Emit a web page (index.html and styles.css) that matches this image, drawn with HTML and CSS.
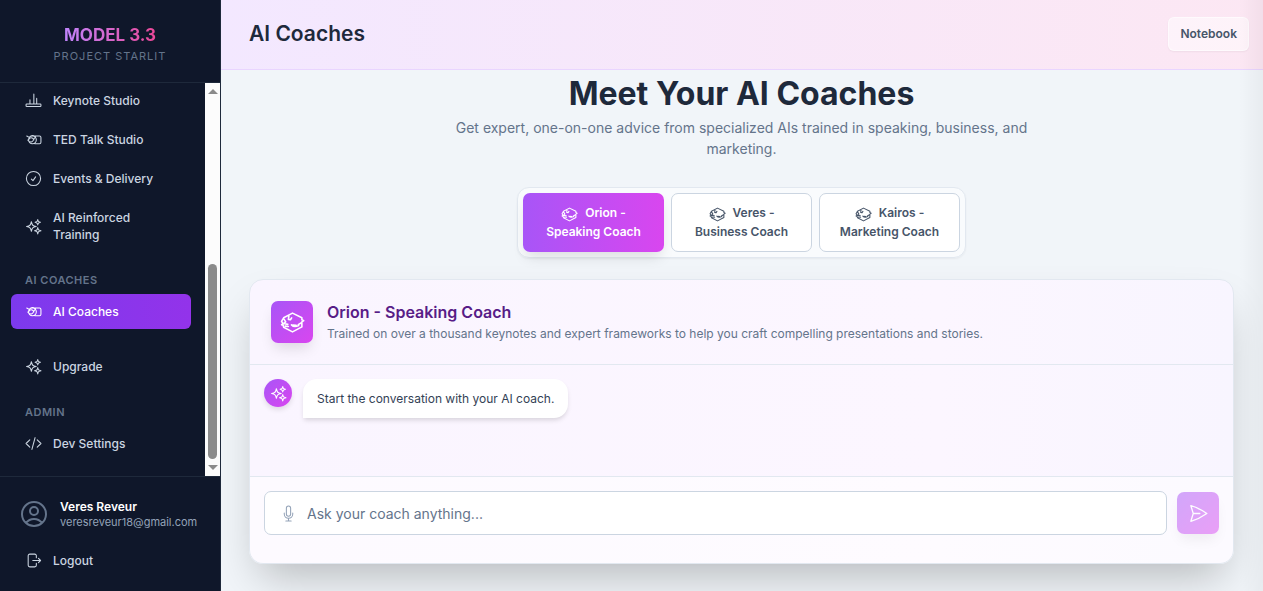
FILE: index.html
```html
<!DOCTYPE html>
<html lang="en">
<head>
    <meta charset="UTF-8">
    <meta name="viewport" content="width=device-width, initial-scale=1.0">
    <title>AI Coaches - Model 3.3</title>
    <link rel="stylesheet" href="styles.css">
</head>
<body>
    <!-- Shared icons -->
    <svg class="icon-defs" aria-hidden="true">
        <symbol id="icon-chart" viewBox="0 0 24 24">
            <path d="M2.500 17h19a1 1 0 0 1 1 1v1.500a1 1 0 0 1-1 1h-19a1 1 0 0 1-1-1V18a1 1 0 0 1 1-1zM7 17v-6M12.500 17V3M16.500 17V9"/>
        </symbol>
        <symbol id="icon-talk" viewBox="0 0 24 24">
            <path d="M2.500 7L6 9M4 13l3-2.500M16 12.500a5.500 5.500 0 1 1-11 0 5.500 5.500 0 0 1 11 0zM6 9c2-3 6-3.500 8-1M6.500 10c3-1 5 0 6 2.500M7 15c1.500 1 4 0 5-2.500S14 9 15 8.500M14 7h6.500a2 2 0 0 1 2 2v7a2 2 0 0 1-2 2H14"/>
        </symbol>
        <symbol id="icon-check" viewBox="0 0 24 24">
            <path d="M9 12.750L11.250 15 15 9.750M22 12a10 10 0 1 1-20 0 10 10 0 0 1 20 0z"/>
        </symbol>
        <symbol id="icon-sparkles" viewBox="0 0 24 24">
            <path d="M9.813 15.904L9 18.750l-.813-2.846a4.500 4.500 0 0 0-3.090-3.090L2.250 12l2.846-.813a4.500 4.500 0 0 0 3.090-3.090L9 5.250l.813 2.846a4.500 4.500 0 0 0 3.090 3.090L15.750 12l-2.846.813a4.500 4.500 0 0 0-3.090 3.090zM18.259 8.715L18 9.750l-.259-1.035a3.375 3.375 0 0 0-2.455-2.456L14.250 6l1.036-.259a3.375 3.375 0 0 0 2.455-2.456L18 2.250l.259 1.035a3.375 3.375 0 0 0 2.456 2.456L21.750 6l-1.035.259a3.375 3.375 0 0 0-2.456 2.456zM18 22.500l-.6-2.200a2.500 2.500 0 0 0-1.700-1.700L13.500 18l2.200-.6a2.500 2.500 0 0 0 1.700-1.700l.6-2.200.6 2.200a2.500 2.500 0 0 0 1.700 1.700l2.200.6-2.200.6a2.500 2.500 0 0 0-1.700 1.700z"/>
        </symbol>
        <symbol id="icon-code" viewBox="0 0 24 24">
            <path d="M17.250 6.750L22.500 12l-5.250 5.250M6.750 17.250L1.500 12l5.250-5.250M14.250 3.750l-4.500 16.500"/>
        </symbol>
        <symbol id="icon-user" viewBox="0 0 24 24">
            <path d="M17.982 18.725A7.488 7.488 0 0 0 12 15.750a7.488 7.488 0 0 0-5.982 2.975M17.982 18.725a9 9 0 1 0-11.963 0M17.982 18.725A8.966 8.966 0 0 1 12 21a8.966 8.966 0 0 1-5.982-2.275M15 9.750a3 3 0 1 1-6 0 3 3 0 0 1 6 0z"/>
        </symbol>
        <symbol id="icon-logout" viewBox="0 0 24 24">
            <path d="M16 8V5.250A2.250 2.250 0 0 0 13.750 3h-7A2.250 2.250 0 0 0 4.500 5.250v13.500A2.250 2.250 0 0 0 6.750 21h7A2.250 2.250 0 0 0 16 18.750V16M11 12h11M19 9l3 3-3 3"/>
        </symbol>
        <symbol id="icon-coach" viewBox="0 0 24 24">
            <path d="M12 3l9 4.500v1.800l1.800.9L21 11.500v4.700L12 21l-8.500-4.500L3 14.700l-1.500-.6L3 13l-1.500-2L3.500 7.500zM4 9l1.500 2.500L3.500 13l4 .8M5 15.500l3 .3M8.500 6l-.5 3 2 .4 1.200-1.800M11 14.300c1.500 1.600 4 2 7 .7M12.500 14.500l3 .2M17.500 14l3.500-2"/>
        </symbol>
        <symbol id="icon-mic" viewBox="0 0 24 24">
            <path d="M12 18.750a6 6 0 0 0 6-6v-1.500m-6 7.500a6 6 0 0 1-6-6v-1.500m6 7.500v3.750m-3.750 0h7.500M12 15.750a3 3 0 0 1-3-3V4.500a3 3 0 1 1 6 0v8.250a3 3 0 0 1-3 3z"/>
        </symbol>
        <symbol id="icon-send" viewBox="0 0 24 24">
            <path d="M6 12L3.269 3.126A59.768 59.768 0 0 1 21.485 12 59.770 59.770 0 0 1 3.270 20.876L5.999 12zm0 0h7.500"/>
        </symbol>
    </svg>

    <div class="app">
        <aside class="sidebar">
            <div class="brand">
                <div class="brand-name">MODEL 3.3</div>
                <div class="brand-tag">PROJECT STARLIT</div>
            </div>

            <div class="nav-area">
                <nav class="nav">
                    <div class="nav-group">
                        <a class="nav-link" href="#"><svg class="icon"><use href="#icon-chart"/></svg>Keynote Studio</a>
                        <a class="nav-link" href="#"><svg class="icon"><use href="#icon-talk"/></svg>TED Talk Studio</a>
                        <a class="nav-link" href="#"><svg class="icon"><use href="#icon-check"/></svg>Events &amp; Delivery</a>
                        <a class="nav-link" href="#"><svg class="icon"><use href="#icon-sparkles"/></svg>AI Reinforced<br>Training</a>
                    </div>
                    <div class="nav-group">
                        <h2 class="nav-heading">AI COACHES</h2>
                        <a class="nav-link active" href="#"><svg class="icon"><use href="#icon-talk"/></svg>AI Coaches</a>
                    </div>
                    <div class="nav-group">
                        <a class="nav-link" href="#"><svg class="icon"><use href="#icon-sparkles"/></svg>Upgrade</a>
                    </div>
                    <div class="nav-group">
                        <h2 class="nav-heading">ADMIN</h2>
                        <a class="nav-link" href="#"><svg class="icon"><use href="#icon-code"/></svg>Dev Settings</a>
                    </div>
                </nav>
                <div class="scrollbar" aria-hidden="true">
                    <span class="arrow arrow-up"></span>
                    <span class="thumb"></span>
                    <span class="arrow arrow-down"></span>
                </div>
            </div>

            <div class="account">
                <div class="user">
                    <svg class="icon user-icon"><use href="#icon-user"/></svg>
                    <div>
                        <div class="user-name">Veres Reveur</div>
                        <div class="user-email">veresreveur18@gmail.com</div>
                    </div>
                </div>
                <button class="nav-link logout" type="button"><svg class="icon"><use href="#icon-logout"/></svg>Logout</button>
            </div>
        </aside>

        <div class="page">
            <header class="topbar">
                <h1>AI Coaches</h1>
                <button class="notebook-btn" type="button">Notebook</button>
            </header>

            <main class="content">
                <div class="intro">
                    <h2>Meet Your AI Coaches</h2>
                    <p>Get expert, one-on-one advice from specialized AIs trained in speaking, business, and marketing.</p>
                </div>

                <div class="coach-tabs">
                    <button class="coach-tab selected" type="button"><svg class="icon"><use href="#icon-coach"/></svg>Orion -<br>Speaking Coach</button>
                    <button class="coach-tab" type="button"><svg class="icon"><use href="#icon-coach"/></svg>Veres -<br>Business Coach</button>
                    <button class="coach-tab" type="button"><svg class="icon"><use href="#icon-coach"/></svg>Kairos -<br>Marketing Coach</button>
                </div>

                <section class="chat-card">
                    <div class="chat-header">
                        <div class="coach-badge"><svg class="icon"><use href="#icon-coach"/></svg></div>
                        <div>
                            <h3>Orion - Speaking Coach</h3>
                            <p>Trained on over a thousand keynotes and expert frameworks to help you craft compelling presentations and stories.</p>
                        </div>
                    </div>
                    <div class="messages">
                        <div class="avatar"><svg class="icon"><use href="#icon-sparkles"/></svg></div>
                        <div class="bubble">Start the conversation with your AI coach.</div>
                    </div>
                    <form class="composer">
                        <label class="ask-box">
                            <svg class="icon"><use href="#icon-mic"/></svg>
                            <input type="text" placeholder="Ask your coach anything..." aria-label="Ask your coach anything">
                        </label>
                        <button class="send-btn" type="button" aria-label="Send"><svg class="icon"><use href="#icon-send"/></svg></button>
                    </form>
                </section>
            </main>
        </div>
    </div>
</body>
</html>
```
FILE: styles.css
```css
* {
    margin: 0;
    padding: 0;
    box-sizing: border-box;
}

body {
    font-family: Inter, "Liberation Sans", sans-serif;
    font-size: 14px;
    color: #1e293b;
    background: #f1f5f9;
}

button,
input {
    font: inherit;
    border: none;
    background: none;
}

button {
    cursor: pointer;
}

a {
    text-decoration: none;
}

.icon-defs {
    display: none;
}

.icon {
    width: 17px;
    height: 17px;
    flex-shrink: 0;
    fill: none;
    stroke: currentColor;
    stroke-width: 1.5;
    stroke-linecap: round;
    stroke-linejoin: round;
}

.app {
    display: flex;
    min-height: 100vh;
}

/* Sidebar */
.sidebar {
    width: 221px;
    flex-shrink: 0;
    display: flex;
    flex-direction: column;
    background: #0f172a;
    border-right: 1px solid #1e293b;
}

.brand {
    padding: 24px 14px 15px;
    text-align: center;
    border-bottom: 1px solid #1e293b;
}

.brand-name {
    width: fit-content;
    margin: 0 auto;
    font-size: 17px;
    font-weight: 700;
    line-height: 22px;
    background: linear-gradient(to right, #c084fc, #ec4899);
    background-clip: text;
    color: transparent;
}

.brand-tag {
    font-size: 11px;
    line-height: 21px;
    letter-spacing: 1px;
    color: #64748b;
}

.nav-area {
    flex: 1;
    display: flex;
}

.nav {
    flex: 1;
    display: flex;
    flex-direction: column;
    gap: 20px;
    padding: 0 14px 15px 11px;
}

.nav-group {
    display: flex;
    flex-direction: column;
    gap: 4px;
}

.nav-heading {
    padding: 0 14px;
    margin-bottom: 2px;
    font-size: 11px;
    font-weight: 600;
    line-height: 16px;
    letter-spacing: 0.5px;
    color: #64748b;
}

.nav-link {
    display: flex;
    align-items: center;
    gap: 11px;
    padding: 9px 14px;
    border-radius: 6px;
    font-size: 12px;
    font-weight: 500;
    line-height: 17px;
    text-align: left;
    color: #cbd5e1;
}

.nav-link.active {
    color: #fff;
    background: linear-gradient(to right, #7c3aed, #9333ea);
}

.scrollbar {
    width: 15px;
    display: flex;
    flex-direction: column;
    align-items: center;
    padding: 6px 0;
    background: #fcfcfc;
}

.arrow {
    border: 5px solid transparent;
}

.arrow-up {
    border-top: none;
    border-bottom-color: #8b8b8b;
}

.arrow-down {
    border-bottom: none;
    border-top-color: #8b8b8b;
}

.thumb {
    width: 9px;
    height: 195px;
    margin: auto 0 6px;
    border-radius: 5px;
    background: #8b8b8b;
}

.account {
    padding: 21px 11px 13px;
    border-top: 1px solid #1e293b;
}

.user {
    display: flex;
    align-items: center;
    gap: 10px;
    padding: 0 7px;
    margin-bottom: 13px;
}

.user-icon {
    width: 32px;
    height: 32px;
    color: #64748b;
}

.user-name {
    font-size: 12px;
    font-weight: 600;
    line-height: 16px;
    color: #fff;
}

.user-email {
    font-size: 11px;
    line-height: 14px;
    color: #94a3b8;
}

.logout {
    width: 100%;
}

/* Page */
.page {
    position: relative;
    flex: 1;
    min-width: 0;
    display: flex;
    flex-direction: column;
}

.page::after {
    content: "";
    position: absolute;
    inset: 0 0 0 auto;
    width: 24px;
    background: linear-gradient(to right, transparent, rgba(0, 0, 0, 0.04));
    pointer-events: none;
}

.topbar {
    display: flex;
    align-items: center;
    justify-content: space-between;
    height: 70px;
    padding: 0 14px 2px 28px;
    background: linear-gradient(to right, #f3e8ff, #fce7f3);
    border-bottom: 1px solid #e9d5ff;
}

.topbar h1 {
    font-size: 21px;
    font-weight: 600;
    line-height: 28px;
}

.notebook-btn {
    height: 34px;
    padding: 0 11px;
    border: 1px solid rgba(255, 255, 255, 0.6);
    border-radius: 6px;
    font-size: 12px;
    font-weight: 600;
    color: #475569;
    background: rgba(255, 255, 255, 0.5);
    box-shadow: 0 1px 2px rgba(0, 0, 0, 0.05);
}

.content {
    flex: 1;
    display: flex;
    flex-direction: column;
    align-items: center;
    padding: 5px 29px 27px 28px;
    overflow: hidden;
}

.intro {
    max-width: 588px;
    margin-bottom: 28px;
    text-align: center;
}

.intro h2 {
    margin-bottom: 4px;
    font-size: 32px;
    font-weight: 700;
    line-height: 38px;
}

.intro p {
    font-size: 14px;
    line-height: 21px;
    color: #64748b;
}

.coach-tabs {
    display: flex;
    gap: 7px;
    padding: 5px;
    margin-bottom: 21px;
    border: 1px solid #e2e8f0;
    border-radius: 12px;
    background: rgba(255, 255, 255, 0.6);
    box-shadow: 0 1px 2px rgba(0, 0, 0, 0.05);
}

.coach-tab {
    width: 141px;
    height: 59px;
    padding: 0 14px;
    border: 1px solid #cbd5e1;
    border-radius: 7px;
    font-size: 12px;
    font-weight: 600;
    line-height: 18px;
    color: #475569;
    background: #fff;
}

.coach-tab .icon {
    margin-right: 7px;
    vertical-align: middle;
}

.coach-tab.selected {
    border-color: transparent;
    color: #fff;
    background: linear-gradient(to right, #a855f7, #d946ef) border-box;
    box-shadow: 0 8px 14px -3px rgba(0, 0, 0, 0.12);
}

/* Chat */
.chat-card {
    width: 100%;
    border: 1px solid #e2e8f0;
    border-radius: 14px;
    background: linear-gradient(to right, #faf5ff, #fcf6ff 70%, #f8f5ff);
    box-shadow: 0 22px 44px -11px rgba(0, 0, 0, 0.25);
}

.chat-header {
    display: flex;
    align-items: center;
    gap: 14px;
    padding: 20px 21px;
    border-bottom: 1px solid #e2e8f0;
}

.chat-header h3 {
    font-size: 16px;
    font-weight: 600;
    line-height: 24px;
    color: #581c87;
}

.chat-header p {
    font-size: 12px;
    line-height: 20px;
    color: #64748b;
}

.coach-badge,
.avatar,
.send-btn {
    display: flex;
    align-items: center;
    justify-content: center;
    flex-shrink: 0;
    width: 42px;
    height: 42px;
    border-radius: 7px;
    color: #fff;
    background: linear-gradient(to bottom right, #a855f7, #d946ef);
    box-shadow: 0 8px 14px -3px rgba(0, 0, 0, 0.12);
}

.coach-badge .icon {
    width: 25px;
    height: 25px;
}

.messages {
    display: flex;
    align-items: flex-start;
    gap: 11px;
    min-height: 111px;
    padding: 14px;
}

.avatar {
    width: 28px;
    height: 28px;
    border-radius: 50%;
    box-shadow: 0 3px 5px rgba(0, 0, 0, 0.1);
}

.bubble {
    padding: 11px 14px;
    border-radius: 14px 14px 14px 0;
    font-size: 12px;
    line-height: 17px;
    color: #334155;
    background: #fff;
    box-shadow: 0 3px 5px -1px rgba(0, 0, 0, 0.15);
}

.composer {
    display: flex;
    align-items: center;
    gap: 10px;
    padding: 14px 14px 28px;
    border-top: 1px solid #e2e8f0;
    border-radius: 0 0 13px 13px;
    background: rgba(255, 255, 255, 0.5);
}

.ask-box {
    flex: 1;
    display: flex;
    align-items: center;
    gap: 10px;
    height: 44px;
    padding: 0 15px;
    border: 1px solid #cbd5e1;
    border-radius: 7px;
    color: #94a3b8;
    background: #fff;
}

.ask-box input {
    flex: 1;
    min-width: 0;
    font-size: 14px;
    color: #334155;
    outline: none;
}

.ask-box input::placeholder {
    color: #64748b;
    opacity: 1;
}

.send-btn {
    opacity: 0.5;
}

.send-btn .icon {
    width: 21px;
    height: 21px;
}
```
